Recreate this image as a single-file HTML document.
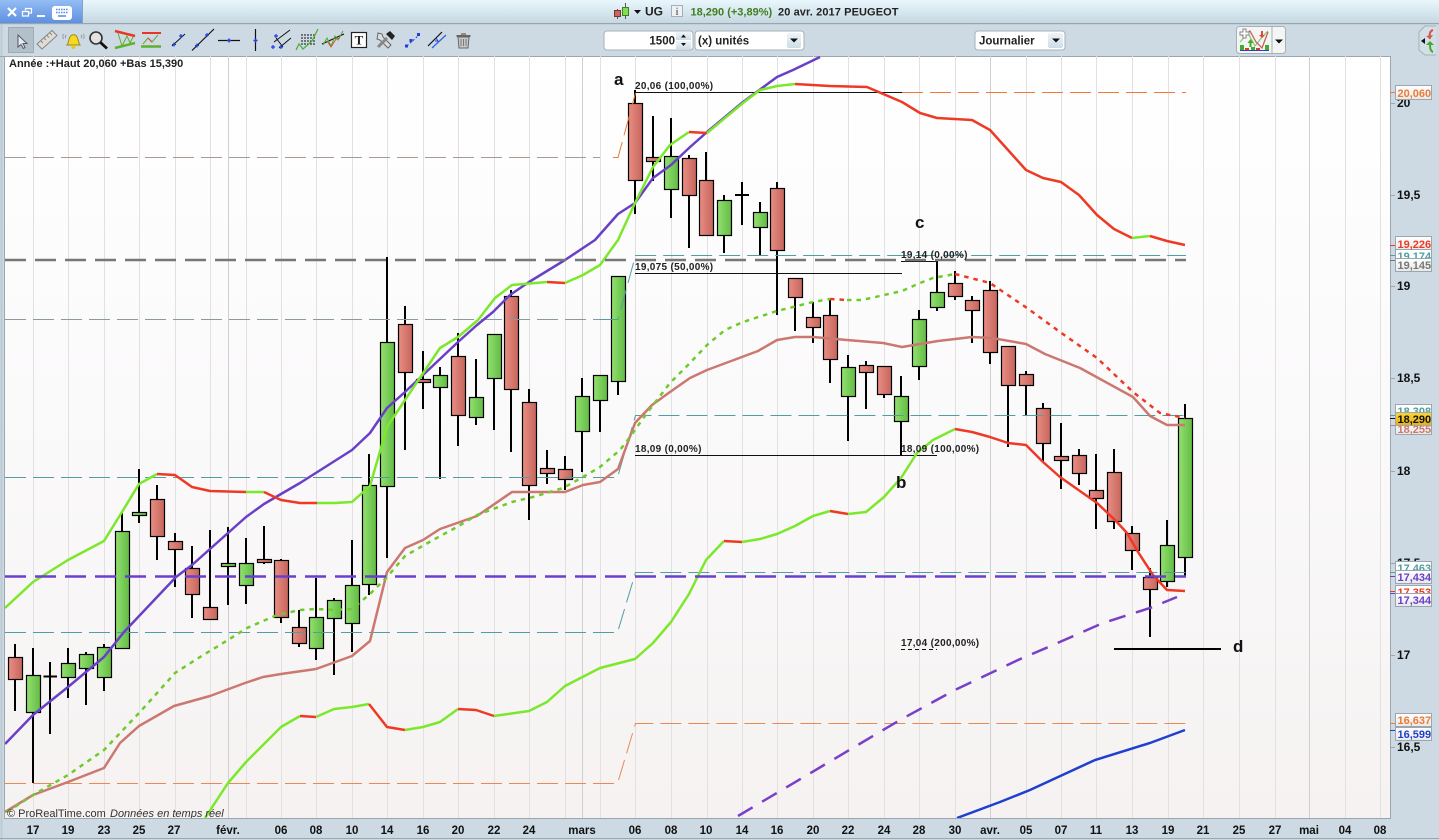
<!DOCTYPE html>
<html lang="fr"><head><meta charset="utf-8"><title>UG PEUGEOT</title>
<style>html,body{margin:0;padding:0;background:#cddae3;overflow:hidden}svg{display:block}
text{font-family:"Liberation Sans",Arial,sans-serif}
.ax{font-size:11.5px;font-weight:bold;fill:#111;text-anchor:middle}
.ay{font-size:12px;font-weight:bold;fill:#111}
.tg{font-size:11px;font-weight:bold}
.fb{font-size:10px;font-weight:bold;fill:#222;letter-spacing:.3px}
.lt{font-size:17px;font-weight:bold;fill:#111}
.tb{font-size:11.5px;font-weight:bold;fill:#222}
</style></head><body>
<svg width="1439" height="840" viewBox="0 0 1439 840" xmlns="http://www.w3.org/2000/svg">
<defs>
<linearGradient id="bg" x1="0" y1="0" x2="0" y2="1"><stop offset="0" stop-color="#fff"/><stop offset=".45" stop-color="#fbfafb"/><stop offset="1" stop-color="#f5f2f1"/></linearGradient>
<linearGradient id="top" x1="0" y1="0" x2="0" y2="1"><stop offset="0" stop-color="#e9f7fd"/><stop offset="1" stop-color="#c6d8e2"/></linearGradient>
<linearGradient id="tab" x1="0" y1="0" x2="0" y2="1"><stop offset="0" stop-color="#93bdf3"/><stop offset="1" stop-color="#5f90e2"/></linearGradient>
<linearGradient id="g" x1="0" y1="0" x2="1" y2="0"><stop offset="0" stop-color="#93e070"/><stop offset="1" stop-color="#62bb44"/></linearGradient>
<linearGradient id="r" x1="0" y1="0" x2="1" y2="0"><stop offset="0" stop-color="#e98e84"/><stop offset="1" stop-color="#c5655c"/></linearGradient>
<linearGradient id="tag" x1="0" y1="0" x2="0" y2="1"><stop offset="0" stop-color="#fff"/><stop offset="1" stop-color="#e8e8e8"/></linearGradient>
<linearGradient id="yel" x1="0" y1="0" x2="0" y2="1"><stop offset="0" stop-color="#fbd53a"/><stop offset="1" stop-color="#e8b010"/></linearGradient>
<linearGradient id="btn" x1="0" y1="0" x2="0" y2="1"><stop offset="0" stop-color="#eef4f8"/><stop offset="1" stop-color="#cddde7"/></linearGradient>
<clipPath id="cp"><rect x="5" y="56" width="1385" height="762"/></clipPath>
</defs>
<rect width="1439" height="840" fill="#cddae3"/>
<!-- top bar -->
<rect width="1439" height="23" fill="url(#top)"/>
<rect y="23" width="1439" height="1.2" fill="#96a5ae"/>
<path d="M0 0H82V23H0Z" fill="url(#tab)"/><path d="M82.5 0V23" stroke="#8aa2bb"/>
<path d="M8 8L16 16M16 8L8 16" stroke="#fff" stroke-width="2.2"/>
<path d="M25.500 10.500V8.500H31.500V13H29M22.500 11.500H28.500V16H22.500Z" fill="none" stroke="#fff" stroke-width="1.200"/>
<rect x="37" y="15" width="8" height="2" fill="#fff"/>
<rect x="52" y="6" width="20" height="14" rx="3" fill="#fff"/>
<path d="M56 9.5h12M56 12.5h12" stroke="#5f90e2" stroke-width="1.6" stroke-dasharray="1.6 .9"/><path d="M58 16h8" stroke="#5f90e2" stroke-width="1.6"/>
<!-- title -->
<path d="M617.500 9V19M625.500 3V19" stroke="#555"/>
<rect x="614.500" y="10.500" width="6" height="6" fill="#d0645a" stroke="#6a3a34"/>
<rect x="622.500" y="7.500" width="6" height="8" fill="#7fe04a" stroke="#4a7a30"/>
<path d="M634 10h7l-3.500 4z" fill="#111"/>
<text x="645" y="15.500" class="tb" style="font-size:12px">UG</text>
<rect x="671.500" y="5.500" width="11" height="11" fill="#eef2f4" stroke="#aab"/>
<text x="677" y="15" style="font-size:10px;font-weight:bold;fill:#777;text-anchor:middle;font-family:'Liberation Serif',serif">i</text>
<text x="690.500" y="15.500" style="font-size:11px;font-weight:bold;fill:#3f7d1e">18,290 (+3,89%)</text>
<text x="778" y="15.500" style="font-size:11px;font-weight:bold;fill:#222;letter-spacing:.1px">20 avr. 2017 PEUGEOT</text>
<!-- controls -->
<rect x="604" y="31" width="89" height="19" rx="3" fill="#fff" stroke="#a4b1ba"/>
<text x="675" y="44.500" class="tb" text-anchor="end">1500</text>
<rect x="676" y="32" width="15" height="8" fill="url(#btn)"/><rect x="676" y="41" width="15" height="8" fill="url(#btn)"/>
<path d="M681 37.500h5l-2.500-3zM681 43h5l-2.500 3z" fill="#111"/>
<rect x="695" y="31" width="109" height="19" rx="3" fill="#fff" stroke="#a4b1ba"/>
<text x="698" y="44.500" class="tb">(x) unités</text>
<rect x="787" y="33" width="14" height="15" rx="2" fill="url(#btn)"/><path d="M790 38.500h8l-4 4z" fill="#111"/>
<rect x="975" y="31" width="90" height="19" rx="3" fill="#fff" stroke="#a4b1ba"/>
<text x="979" y="44.500" class="tb">Journalier</text>
<rect x="1048" y="33" width="15" height="15" rx="2" fill="url(#btn)"/><path d="M1052 38.500h8l-4 4z" fill="#111"/>
<rect x="1236.500" y="26.500" width="49" height="27" rx="3" fill="#f4f5f5" stroke="#a4b1ba"/>
<path d="M1272 27V53" stroke="#a4b1ba"/><path d="M1275 39.500h8l-4 4z" fill="#111"/>
<path d="M1240 42L1248 33L1255 46L1263 36L1268 31" fill="none" stroke="#8fc97a" stroke-width="1.3"/>
<path d="M1242 36L1250 31L1256 42L1262 48L1268 32" fill="none" stroke="#c8605a" stroke-width="1.3"/>
<path d="M1243 29h3v3h3v3h-3v3h-3v-3h-3v-3h3z" fill="#fff" stroke="#888"/>
<path d="M1250.500 39l-3 4h2v4h2v-4h2z" fill="#3fae2a"/><path d="M1261 31v4h-2l3 3 3-3h-2v-4z" fill="#e8453a"/>
<path d="M1240 45h4v5h-4zM1251 47h4v3h-4zM1265 45h4v5h-4z" fill="#3fae2a"/><path d="M1245 48h4v2h-4zM1256 48h4v2h-4z" fill="#d0403a"/>
<path d="M1240 50.500h29" stroke="#2a3fd0"/>
<path d="M1436 26h-11l-6 6v18l6 5h11" fill="#d3dfe6" stroke="#a4b1ba"/>
<path d="M1425 38v6l-4-3z" fill="#111"/>
<path d="M1433 30c-3 1-4 4-3 9" fill="none" stroke="#d8544a" stroke-width="2"/><path d="M1426 36l4 3 3-4z" fill="#d8544a"/>
<path d="M1433 52c-3-1-3-5-3-9" fill="none" stroke="#48a82e" stroke-width="2"/><path d="M1426 45l4-4 4 4z" fill="#48a82e"/>
<!-- toolbar icons -->
<rect x="8.500" y="27.500" width="25" height="25" fill="#b3c0c9" stroke="#9dabb4"/>
<path d="M18 35V47L21 44.500L23.300 48.500L25 47.500L23 43.500H27Z" fill="#e4ebef" stroke="#556"/>
<path d="M37 44L52 30.500L57 35.500L42 49Z" fill="#e0ddd4" stroke="#888"/><path d="M41 41l2 2M44 38l2 2M47 35.500l2 2M50 33l2 2" stroke="#888"/>
<path d="M67 45c2-2 1-5 3-8 1.500-3 5.500-3 7 0 2 3 1 6 3 8Z" fill="#f6d925" stroke="#a08a10"/><circle cx="73.500" cy="47" r="2" fill="#e8c520"/>
<path d="M66 35c-1 1-1 2 0 3M63.500 34c-1 2-1 3 0 5M81 35c1 1 1 2 0 3M83.500 34c1 2 1 3 0 5" fill="none" stroke="#999"/>
<circle cx="96" cy="38" r="6" fill="#e2e2e2" stroke="#333" stroke-width="1.600"/><path d="M100.500 42.500L107 48.500" stroke="#111" stroke-width="2.800"/>
<path d="M115 31L135 36" stroke="#e8352a" stroke-width="2.500"/><path d="M115 48L135 43" stroke="#5fb02c" stroke-width="2.500"/>
<path d="M118 33L122 46L127 36L130 43L133 37" fill="none" stroke="#5fb02c"/>
<path d="M142 33H161" stroke="#e8352a" stroke-width="2"/><path d="M141 46.500H161" stroke="#5fb02c" stroke-width="2.500"/>
<path d="M143 44L148 38L152 42L158 35" fill="none" stroke="#5fb02c"/><path d="M148 38L152 42" stroke="#e8352a"/>
<path d="M172 46L185 34" stroke="#111"/><path d="M172 44.500h4M174 42.500v4M179 36h4M181 34v4" stroke="#1f3fe0" stroke-width="1.200"/>
<path d="M192 50.500L214 29" stroke="#111" stroke-width="1.200"/><path d="M195 45.500h4M197 43.500v4M205 35h4M207 33v4" stroke="#1f3fe0" stroke-width="1.200"/>
<path d="M218 40.500H240" stroke="#111" stroke-width="1.200"/><path d="M227 40.500h4M229 38.500v4" stroke="#1f3fe0" stroke-width="1.500"/>
<path d="M255.500 29V51" stroke="#111" stroke-width="1.200"/><path d="M253.500 40.500h4M255.500 38.500v4" stroke="#1f3fe0" stroke-width="1.500"/>
<path d="M274 42L290 30M279 48L291 38M276 38L283 47" stroke="#111" fill="none"/><path d="M274 36h4M276 34v4M271 47h4M273 45v4M279 47h4M281 45v4" stroke="#1f3fe0" stroke-width="1.200"/>
<path d="M301 35h14M301 38h14M301 41h14M301 44h14" stroke="#111" stroke-dasharray="2 1"/>
<path d="M296 50L299 44L303 49L312 41L318 29" fill="none" stroke="#48b02c" stroke-width="1.200"/>
<path d="M322 44L344 34" stroke="#111" stroke-width="1.200"/><path d="M323 45L327 38L331 46L335 36L338 40L343 31" fill="none" stroke="#48b02c"/><path d="M327 41L331 47L336 39L340 38" fill="none" stroke="#e04a3a"/>
<rect x="351.500" y="32.500" width="15" height="15" fill="#fff" stroke="#222" stroke-width="1.200"/>
<text x="359" y="44.500" style="font-family:'Liberation Serif',serif;font-weight:bold;font-size:13px;text-anchor:middle;fill:#222">T</text>
<path d="M378 33l4 1 1 3 8 8-3 3-8-8-3-1z" fill="#ddd" stroke="#666"/><path d="M378 47l9-9" stroke="#888" stroke-width="3"/>
<path d="M386 34l4-3 5 5-3 4z" fill="#222"/>
<path d="M407 46L419 35" stroke="#1f3fe0" stroke-dasharray="2 2"/><rect x="405" y="44.500" width="3" height="3" fill="#1f3fe0"/><rect x="409.500" y="39" width="3" height="3" fill="#1f3fe0"/><rect x="417" y="33" width="3" height="3" fill="#1f3fe0"/>
<path d="M428 46L442 32" stroke="#111" stroke-width="1.200"/><path d="M432 48L446 35" stroke="#2f5fe8" stroke-width="1.200"/><path d="M436 38l2 3h-3" fill="none" stroke="#1f3fe0"/>
<path d="M458 37H469L468 48H459Z" fill="#c8c8c8" stroke="#666"/><path d="M456.500 36h14" stroke="#666" stroke-width="2"/><path d="M461 34h5" stroke="#777" stroke-width="1.500"/><path d="M461 39v7M463.500 39v7M466 39v7" stroke="#777"/>
<!-- chart frame -->
<rect x="5" y="56" width="1385" height="762" fill="url(#bg)"/>
<path d="M0 24V840" stroke="#bccad4" stroke-width="2" transform="translate(1.500 0)"/>
<path d="M4.500 56V818.500H1390.500V56M0 56.500H1390.500M0 838.500H1439" fill="none" stroke="#9aa7af"/>
<g stroke="#e2e0e0" fill="none"><path d="M33.500 56V818M68.500 56V818M104.500 56V818M139.500 56V818M175.500 56V818M210.500 56V818M246.500 56V818M281.500 56V818M316.500 56V818M352.500 56V818M387.500 56V818M423.500 56V818M458.500 56V818M494.500 56V818M529.500 56V818M565.500 56V818M600.500 56V818M635.500 56V818M671.500 56V818M707.500 56V818M742.500 56V818M777.500 56V818M813.500 56V818M848.500 56V818M884.500 56V818M919.500 56V818M955.500 56V818M1026.500 56V818M1061.500 56V818M1096.500 56V818M1132.500 56V818M1168.500 56V818M1203.500 56V818M1239.500 56V818M1275.500 56V818M1345.500 56V818M1380.500 56V818"/></g>
<path d="M228.500 56V818M582.500 56V818M990.500 56V818M1309.500 56V818" stroke="#d0cfcf"/>
<g clip-path="url(#cp)">
<!-- wicks -->
<path stroke="#000" stroke-width="2" fill="none" d="M15 644V711M33 648V783M50 662V734M68 648V698M86 652V705M104 644V691M122 512V648M139 469V523M157 485V560M175 533V587M192 546V618M210 530V619M228 527V605M246 538V604M264 526V564M281 559V623M299 610V647M316 578V660M334 598V675M352 540V652M369 454V595M387 257V558M405 306V450M423 351V409M440 367V479M458 333V446M476 359V425M494 334V430M511 290V452M529 389V520M547 450V484M565 456V490M582 378V472M600 375V432M618 276V395M635 90V214M653 116V181M671 118V218M689 155V248M706 152V235M724 195V253M742 182V225M760 202V255M777 182V315M795 278V331M813 302V343M830 300V383M848 355V441M866 361V409M884 366V398M901 376V455M919 310V380M937 261V311M955 271V300M972 296V343M990 281V364M1008 346V447M1026 371V415M1043 403V461M1061 423V489M1079 449V485M1096 454V529M1114 449V529M1132 526V570M1150 568V637M1167 520V587M1185 404V576"/>
<!-- bodies -->
<g stroke="#000" stroke-width="1.200" fill="url(#r)">
<rect x="8.500" y="657.500" width="14" height="22"/><rect x="150.500" y="499.500" width="14" height="37"/><rect x="168.500" y="541.500" width="14" height="8"/><rect x="185.500" y="568.500" width="14" height="26"/><rect x="203.500" y="607.500" width="14" height="12"/><rect x="257.500" y="559.500" width="14" height="3"/><rect x="274.500" y="560.500" width="14" height="57"/><rect x="292.500" y="627.500" width="14" height="16"/><rect x="398.500" y="324.500" width="14" height="48"/><rect x="416.500" y="379.500" width="14" height="3"/><rect x="451.500" y="356.500" width="14" height="59"/><rect x="504.500" y="296.500" width="14" height="93"/><rect x="522.500" y="402.500" width="14" height="83"/><rect x="540.500" y="468.500" width="14" height="5"/><rect x="558.500" y="469.500" width="14" height="10"/><rect x="628.500" y="103.500" width="14" height="77"/><rect x="646.500" y="157.500" width="14" height="4"/><rect x="682.500" y="158.500" width="14" height="37"/><rect x="699.500" y="180.500" width="14" height="55"/><rect x="770.500" y="188.500" width="14" height="62"/><rect x="788.500" y="278.500" width="14" height="19"/><rect x="806.500" y="317.500" width="14" height="10"/><rect x="823.500" y="315.500" width="14" height="44"/><rect x="859.500" y="365.500" width="14" height="7"/><rect x="877.500" y="366.500" width="14" height="28"/><rect x="948.500" y="283.500" width="14" height="13"/><rect x="965.500" y="300.500" width="14" height="10"/><rect x="983.500" y="290.500" width="14" height="62"/><rect x="1001.500" y="346.500" width="14" height="39"/><rect x="1019.500" y="374.500" width="14" height="11"/><rect x="1036.500" y="408.500" width="14" height="35"/><rect x="1054.500" y="456.500" width="14" height="4"/><rect x="1072.500" y="455.500" width="14" height="18"/><rect x="1089.500" y="490.500" width="14" height="8"/><rect x="1107.500" y="472.500" width="14" height="49"/><rect x="1125.500" y="533.500" width="14" height="17"/><rect x="1143.500" y="577.500" width="14" height="12"/>
</g>
<g stroke="#000" stroke-width="1.200" fill="url(#g)">
<rect x="26.500" y="675.500" width="14" height="37"/><rect x="61.500" y="663.500" width="14" height="14"/><rect x="79.500" y="654.500" width="14" height="14"/><rect x="97.500" y="647.500" width="14" height="30"/><rect x="115.500" y="531.500" width="14" height="117"/><rect x="132.500" y="512.500" width="14" height="3"/><rect x="221.500" y="563.500" width="14" height="3"/><rect x="239.500" y="563.500" width="14" height="22"/><rect x="309.500" y="617.500" width="14" height="31"/><rect x="327.500" y="600.500" width="14" height="18"/><rect x="345.500" y="585.500" width="14" height="38"/><rect x="362.500" y="485.500" width="14" height="99"/><rect x="380.500" y="342.500" width="14" height="144"/><rect x="433.500" y="375.500" width="14" height="12"/><rect x="469.500" y="397.500" width="14" height="20"/><rect x="487.500" y="334.500" width="14" height="44"/><rect x="575.500" y="396.500" width="14" height="35"/><rect x="593.500" y="375.500" width="14" height="25"/><rect x="611.500" y="276.500" width="14" height="105"/><rect x="664.500" y="156.500" width="14" height="33"/><rect x="717.500" y="200.500" width="14" height="35"/><rect x="753.500" y="212.500" width="14" height="15"/><rect x="841.500" y="367.500" width="14" height="29"/><rect x="894.500" y="396.500" width="14" height="25"/><rect x="912.500" y="319.500" width="14" height="47"/><rect x="930.500" y="292.500" width="14" height="15"/><rect x="1160.500" y="545.500" width="14" height="36"/><rect x="1178.500" y="418.500" width="14" height="139"/>
</g>
<path d="M43.500 676.500H57M735 195H749" stroke="#000" stroke-width="2"/>
<!-- thin step dashes -->
<g fill="none" stroke-width="1" stroke-dasharray="21 7">
<path stroke="#e98a55" d="M5 783.500H617.500L635.500 723.500H1186"/>
<path stroke="#a89a90" d="M5 157.500H600"/><path stroke="#ee7a35" d="M613 157.500H618L635.500 93"/>
<path stroke="#ee7a35" d="M902 92.500H1186"/>
<path stroke="#4f9ea0" d="M5 477.500H617.500L635.500 415.500H1186"/>
<path stroke="#4f9ea0" d="M5 632.500H617.500L635.500 572.500H1186"/>
<path stroke="#8a9a9a" d="M5 319.500H600"/><path stroke="#4f9ea0" d="M600 319.500H618L635.500 255.500H1186"/>
</g>
<!-- fibonacci -->
<path stroke="#111" fill="none" d="M635 92.500H902M635 273.500H902M635 455.500H937M901 261.500H937"/>
<path stroke="#111" fill="none" stroke-dasharray="4 3" d="M901 649.500H937"/>
<path stroke="#000" stroke-width="2" d="M1114 649H1221"/>
<!-- salmon -->
<path fill="none" stroke="#cb7870" stroke-width="2.500" stroke-linejoin="round" d="M5 812L33 795L68 782L104 768L120 743L139 726L174 706L210 696L245 683L263 677L281 674L316 669L352 656L370 641L387 572L405 548L423 540L440 529L477 516L512 492L529 492L565 492L583 485L600 482L618 469L635 423L652 405L670 392L690 378L707 370L758 351L777 340L795 337L813 337L847 340L883 343L902 347L938 341L972 337L992 338L1026 344L1045 354L1080 368L1133 397L1150 416L1167 425L1185 425"/>
<!-- dotted -->
<g fill="none" stroke-width="2.500" stroke-dasharray="4.500 5">
<path stroke="#6ecb2c" d="M7 812L33 795L68 775L104 750L140 712L175 673L200 657L228 640L247 628L277 615L300 610L316 609L334 610L352 609L370 594L387 577L405 556L433 540L457 527L477 515L512 502L533 497L563 488L583 477L600 467L620 450L630 437L647 413L670 383L690 363L707 345L725 330L743 322L777 311L813 302L830 299"/>
<path stroke="#ee3a24" d="M830 299L847 300"/>
<path stroke="#6ecb2c" d="M847 300L862 300L902 291L920 283L933 278L955 274"/>
<path stroke="#ee3a24" d="M955 274L990 283L1027 308L1060 332L1097 358L1133 392L1160 413L1185 418"/>
</g>
<!-- purple line -->
<path fill="none" stroke="#6a3fc8" stroke-width="2.500" stroke-linejoin="round" d="M5 744L33 715L68 687L104 657L124 632L176 577L192 565L210 549L228 533L246 517L264 504L281 494L300 483L352 450L370 433L387 408L405 392L423 375L458 342L477 325L493 312L510 295L529 282L565 260L595 240L618 214L635 203L653 178L671 165L689 148L707 132L743 102L777 77L793 70L820 57"/>
<!-- lime / red upper -->
<g fill="none" stroke-width="2.500" stroke-linejoin="round">
<path stroke="#7ce82c" d="M5 608L33 582L68 560L104 541L122 512L139 484L157 474"/>
<path stroke="#ee3a24" d="M157 474L175 475L192 487L210 491L246 492"/>
<path stroke="#7ce82c" d="M246 492L264 492"/>
<path stroke="#ee3a24" d="M264 492L281 500L300 503L317 503"/>
<path stroke="#7ce82c" d="M317 503L335 503L352 502L370 486L387 427L407 397L440 348L458 337L478 320L495 298L512 285L547 282"/>
<path stroke="#ee3a24" d="M547 282L565 283"/>
<path stroke="#7ce82c" d="M565 283L583 275L600 265L618 240L635 203L653 167L670 145L689 132"/>
<path stroke="#ee3a24" d="M689 132L707 133"/>
<path stroke="#7ce82c" d="M707 133L743 103L760 90L777 86L795 84"/>
<path stroke="#ee3a24" d="M795 84L830 86L867 87L902 102L920 113L937 118L972 120L990 130L1008 150L1026 170L1043 178L1061 182L1079 195L1097 215L1114 229L1132 238"/>
<path stroke="#7ce82c" d="M1132 238L1150 236"/>
<path stroke="#ee3a24" d="M1150 236L1167 241L1185 245"/>
<!-- lower -->
<path stroke="#7ce82c" d="M205 818L228 783L246 762L281 727L300 716"/>
<path stroke="#ee3a24" d="M300 716L316 717"/>
<path stroke="#7ce82c" d="M316 717L334 709L352 707L369 704"/>
<path stroke="#ee3a24" d="M369 704L387 727L405 730"/>
<path stroke="#7ce82c" d="M405 730L423 727L440 722L458 709"/>
<path stroke="#ee3a24" d="M458 709L476 710L494 716"/>
<path stroke="#7ce82c" d="M494 716L529 711L547 702L565 686L600 668L635 659L653 643L671 622L689 594L706 560L724 541"/>
<path stroke="#ee3a24" d="M724 541L742 542"/>
<path stroke="#7ce82c" d="M742 542L760 539L777 534L795 526L813 516L830 511"/>
<path stroke="#ee3a24" d="M830 511L848 514"/>
<path stroke="#7ce82c" d="M848 514L866 512L884 497L901 478L917 453L933 440L955 429"/>
<path stroke="#ee3a24" d="M955 429L972 432L990 437L1008 443L1026 445L1043 462L1060 477L1097 503L1115 520L1127 533L1138 552L1153 575L1167 590L1185 591"/>
</g>
<path fill="none" stroke="#7a3fc8" stroke-width="2.500" stroke-dasharray="17 11" d="M738 816L900 720L955 690L1018 660L1053 645L1103 623L1150 608L1177 597"/>
<path fill="none" stroke="#1f3fd0" stroke-width="2.500" d="M957 818L1000 802L1030 790L1095 760L1150 743L1185 730"/>
<path stroke="#777" stroke-width="2.500" stroke-dasharray="21 9" d="M5 260H1186"/>
<path stroke="#6a3fd0" stroke-width="2.500" stroke-dasharray="21 9" d="M5 576.500H1186"/>
<!-- labels -->
<text x="635" y="89" class="fb">20,06 (100,00%)</text>
<text x="635" y="270" class="fb">19,075 (50,00%)</text>
<text x="635" y="452" class="fb">18,09 (0,00%)</text>
<text x="901" y="258" class="fb">19,14 (0,00%)</text>
<text x="901" y="452" class="fb">18,09 (100,00%)</text>
<text x="901" y="646" class="fb">17,04 (200,00%)</text>
<text x="614" y="85" class="lt">a</text><text x="915" y="228" class="lt">c</text><text x="896" y="488" class="lt">b</text><text x="1233" y="652" class="lt">d</text>
<text x="9" y="67" style="font-size:11px;font-weight:bold;fill:#222">Année :+Haut 20,060 +Bas 15,390</text>
<text x="7" y="817" style="font-size:11px;fill:#333">© ProRealTime.com</text>
<text x="110" y="817" style="font-size:11px;font-style:italic;fill:#333">Données en temps réel</text>
</g>
<!-- x axis -->
<g class="ax">
<text x="33" y="834" class="ax">17</text><text x="68" y="834" class="ax">19</text><text x="104" y="834" class="ax">23</text><text x="139" y="834" class="ax">25</text><text x="174" y="834" class="ax">27</text><text x="228" y="834" class="ax">févr.</text><text x="281" y="834" class="ax">06</text><text x="316" y="834" class="ax">08</text><text x="352" y="834" class="ax">10</text><text x="387" y="834" class="ax">14</text><text x="423" y="834" class="ax">16</text><text x="458" y="834" class="ax">20</text><text x="494" y="834" class="ax">22</text><text x="529" y="834" class="ax">24</text><text x="582" y="834" class="ax">mars</text><text x="635" y="834" class="ax">06</text><text x="671" y="834" class="ax">08</text><text x="706" y="834" class="ax">10</text><text x="742" y="834" class="ax">14</text><text x="777" y="834" class="ax">16</text><text x="813" y="834" class="ax">20</text><text x="848" y="834" class="ax">22</text><text x="884" y="834" class="ax">24</text><text x="919" y="834" class="ax">28</text><text x="955" y="834" class="ax">30</text><text x="990" y="834" class="ax">avr.</text><text x="1026" y="834" class="ax">05</text><text x="1061" y="834" class="ax">07</text><text x="1096" y="834" class="ax">11</text><text x="1132" y="834" class="ax">13</text><text x="1168" y="834" class="ax">19</text><text x="1203" y="834" class="ax">21</text><text x="1239" y="834" class="ax">25</text><text x="1275" y="834" class="ax">27</text><text x="1309" y="834" class="ax">mai</text><text x="1345" y="834" class="ax">04</text><text x="1380" y="834" class="ax">08</text>
</g>
<path d="M1390 103.500h5M1390 195.500h5M1390 286.500h5M1390 378.500h5M1390 471.500h5M1390 563.500h5M1390 655.500h5M1390 747.500h5" stroke="#9aa7af"/>
<g><text x="1397" y="107" class="ay">20</text><text x="1397" y="199" class="ay">19,5</text><text x="1397" y="290" class="ay">19</text><text x="1397" y="382" class="ay">18,5</text><text x="1397" y="475" class="ay">18</text><text x="1397" y="567" class="ay">17,5</text><text x="1397" y="659" class="ay">17</text><text x="1397" y="751" class="ay">16,5</text></g>
<!-- tag connectors -->
<path d="M1390 92.500h6" stroke="#ee7a35"/><path d="M1390 245.500h6" stroke="#ee3a24"/><path d="M1390 255.500h6" stroke="#4f9ea0"/><path d="M1390 260.500h6" stroke="#777"/><path d="M1390 415.500h6" stroke="#4f9ea0"/><path d="M1390 418.500h6" stroke="#111"/><path d="M1390 425.500h6" stroke="#cb7870"/><path d="M1390 572.500h6" stroke="#4f9ea0"/><path d="M1390 576.500h6" stroke="#6a3fd0"/><path d="M1390 591.500h6" stroke="#ee3a24"/><path d="M1390 593.500h6" stroke="#6a3fd0"/><path d="M1390 723.500h6" stroke="#ee7a35"/><path d="M1390 730.500h6" stroke="#1f3fd0"/>
<!-- tags -->
<g stroke="#9aa7af">
<rect x="1395.500" y="85.500" width="36" height="14" fill="url(#tag)"/>
<rect x="1395.500" y="248.500" width="36" height="14" fill="#fff"/>
<rect x="1395.500" y="236.500" width="36" height="13" fill="url(#tag)"/>
<rect x="1395.500" y="404.500" width="36" height="14" fill="#fff"/>
<rect x="1395.500" y="420.500" width="36" height="14" fill="url(#tag)"/>
<rect x="1395.500" y="561.500" width="36" height="14" fill="#fff"/>
<rect x="1395.500" y="585.500" width="36" height="13" fill="#fff"/>
<rect x="1395.500" y="713.500" width="36" height="13" fill="url(#tag)"/>
</g>
<text x="1397.500" y="97" class="tg" fill="#ee7a35">20,060</text>
<text x="1397.500" y="248" class="tg" fill="#ee3a24">19,226</text>
<text x="1397.500" y="260" class="tg" fill="#4f9ea0">19,174</text>
<text x="1397.500" y="415" class="tg" fill="#4f9ea0">18,308</text>
<text x="1397.500" y="433" class="tg" fill="#cb7870">18,255</text>
<text x="1397.500" y="572" class="tg" fill="#4f9ea0">17,463</text>
<text x="1397.500" y="596" class="tg" fill="#ee3a24">17,353</text>
<text x="1397.500" y="724" class="tg" fill="#ee7a35">16,637</text>
<g stroke="#9aa7af">
<rect x="1395.500" y="258.500" width="36" height="13" fill="url(#tag)"/>
<rect x="1395.500" y="412.500" width="36" height="13" fill="url(#yel)"/>
<rect x="1395.500" y="570.500" width="36" height="13" fill="url(#tag)"/>
<rect x="1395.500" y="593.500" width="36" height="13" fill="url(#tag)"/>
<rect x="1395.500" y="727.500" width="36" height="13" fill="url(#tag)"/>
</g>
<text x="1397.500" y="269" class="tg" fill="#777">19,145</text>
<text x="1397.500" y="423" class="tg" fill="#111">18,290</text>
<text x="1397.500" y="581" class="tg" fill="#6a3fc8">17,434</text>
<text x="1397.500" y="604" class="tg" fill="#6a3fc8">17,344</text>
<text x="1397.500" y="738" class="tg" fill="#1f3fd0">16,599</text>
</svg>
</body></html>
